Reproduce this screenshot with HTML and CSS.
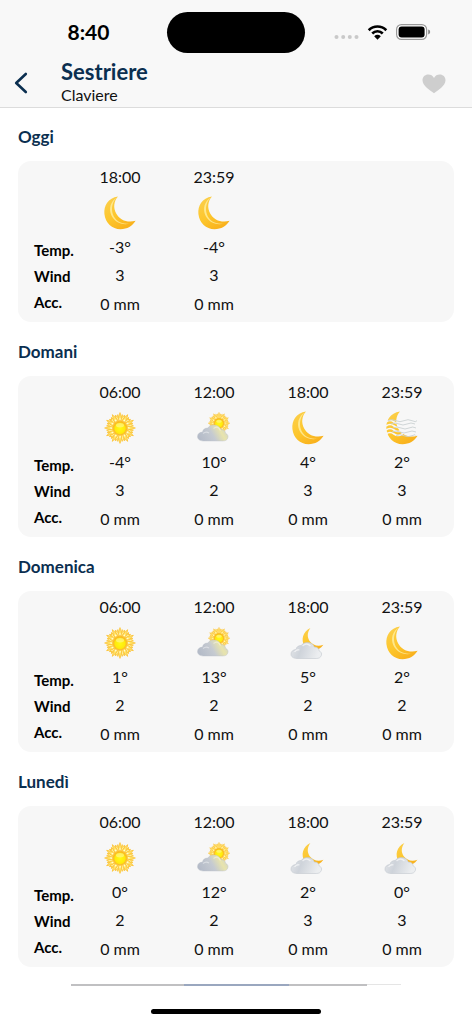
FILE: index.html
```html
<!DOCTYPE html>
<html lang="it">
<head>
<meta charset="utf-8">
<meta name="viewport" content="width=device-width, initial-scale=1">
<title>Sestriere - Claviere</title>
<link rel="stylesheet" href="styles.css">
</head>
<body>
<svg class="sprite" aria-hidden="true">
  <defs>
    <linearGradient id="moon-fill" x1="0" y1="0" x2="0.6" y2="1"><stop offset="0" stop-color="#fbd04f"/><stop offset="0.6" stop-color="#fdc62c"/><stop offset="1" stop-color="#f9b21d"/></linearGradient>
    <radialGradient id="sun-fill" cx="0.5" cy="0.55" r="0.55"><stop offset="0" stop-color="#fffb14"/><stop offset="0.7" stop-color="#ffe90d"/><stop offset="1" stop-color="#f7b718"/></radialGradient>
    <linearGradient id="day-cloud" x1="0" y1="0.6" x2="1" y2="0.3"><stop offset="0" stop-color="#b4bbc8"/><stop offset="0.45" stop-color="#c5cad1"/><stop offset="0.75" stop-color="#e8e4ac"/><stop offset="1" stop-color="#d1d4cb"/></linearGradient>
    <linearGradient id="night-cloud" x1="0" y1="0" x2="1" y2="0.2"><stop offset="0" stop-color="#e4e6e9"/><stop offset="0.4" stop-color="#ced3da"/><stop offset="1" stop-color="#eceef0"/></linearGradient>
    <g id="ray"><path d="M-3-7Q-4.6-10.5-2.2-13.4Q-1-10.5-1.5-8M3-7Q4.6-10.5 2.2-13.4Q1-10.5 1.5-8" fill="#fff0a0" stroke="#fbc437" stroke-width=".8"/><path d="M-1.9-6Q-2-11 0-15.4 2-11 1.9-6z" fill="#ffe268" stroke="#fcc02f" stroke-width=".7"/><circle cy="-8.8" r=".9" fill="#fffbd0"/></g>
    <g id="rays"><use href="#ray"/><use href="#ray" transform="rotate(30)"/><use href="#ray" transform="rotate(60)"/><use href="#ray" transform="rotate(90)"/><use href="#ray" transform="rotate(120)"/><use href="#ray" transform="rotate(150)"/><use href="#ray" transform="rotate(180)"/><use href="#ray" transform="rotate(210)"/><use href="#ray" transform="rotate(240)"/><use href="#ray" transform="rotate(270)"/><use href="#ray" transform="rotate(300)"/><use href="#ray" transform="rotate(330)"/></g>
    <g id="sun-shape"><circle r="10" fill="#fcb62c"/><use href="#rays"/><circle r="7.6" fill="#fbb62a" opacity=".75"/><circle r="6.3" fill="url(#sun-fill)"/><ellipse cy="-2.8" rx="4" ry="2.2" fill="#fff" opacity=".35"/></g>
    <path id="cloud-shape" d="M6 16C2.5 16 0 14.3 0 11.6 0 8.9 2.1 7.2 5 7.1 5.4 4.4 7.6 2.9 10.2 3.1 11.5 1 13.7 0 16.2 0 20 0 22.6 2 23.3 4.6 26 4.4 28 6 28.1 8.3 30.2 9.3 31 11 30.4 12.8 29.7 15 28 16 25.2 16z"/>
    <path id="moon-shape" d="M18 3.4C8 5 3.6 12.5 4.4 21 5.4 30 12 36 20.5 36.3 27.4 36.2 32.4 33 35.6 27.8 27.5 30.1 19.8 27.2 16.2 20.5 13 14.6 13.8 8.2 18 3.4z"/>
  </defs>
  <symbol id="sun" viewBox="0 0 40 40"><use href="#sun-shape" transform="translate(20 20)"/></symbol>
  <symbol id="moon" viewBox="0 0 40 40"><use href="#moon-shape" fill="url(#moon-fill)"/><path d="M17 4.6C10.5 8.3 8.7 15.5 11 21.5 14 29.2 22.4 32.7 30 30.5 22 31.8 15 28 12.8 21 11 15 12.4 8.5 17 4.6z" fill="#fff1a8" opacity=".75"/></symbol>
  <symbol id="sun-cloud" viewBox="0 0 40 40"><use href="#sun-shape" transform="translate(25 15.2) scale(.7)"/><use href="#cloud-shape" transform="translate(3.5 17)" fill="url(#day-cloud)" stroke="#bcc1c9" stroke-width=".4"/><path d="M19.5 20.5Q24 17 26.5 22.5M9 25.5Q12 23 15 25" fill="none" stroke="#fff" stroke-width="1.3" opacity=".4"/></symbol>
  <symbol id="moon-cloud" viewBox="0 0 40 40"><path d="M22.4 5C14.8 8.4 12.3 17 17 24 22 29.5 31 28.5 35.4 21.8 30 23.6 25 22.5 22 18.5 19 14.5 19 9.5 22.4 5z" fill="url(#moon-fill)"/><use href="#cloud-shape" transform="translate(3 19.5)" fill="url(#night-cloud)" stroke="#c3c7ce" stroke-width=".6"/><path d="M14.5 23Q18.5 19 22.5 23M6.5 29Q8.5 26 11.5 27" fill="none" stroke="#fff" stroke-width="1.3" opacity=".6"/></symbol>
  <symbol id="moon-fog" viewBox="0 0 40 40"><use href="#moon-shape" fill="url(#moon-fill)"/><g fill="none" stroke="#f7f7f7" stroke-width="1.6"><path d="M4 14q4-3 8 0t8 0 8 0 8 0M4 18q4-3 8 0t8 0 8 0 8 0M4 22q4-3 8 0t8 0 8 0 8 0M4 26q4-3 8 0t8 0 8 0 8 0"/></g><g fill="none" stroke="#cbd1d3" stroke-width=".9"><path d="M6 12.7q4-2 8 0t8 0 8 0 5 0M9 16q4-2 8 0t8 0 8 0M11 20q4-2 8 0t8 0 7 0M10 24q4-2 8 0t8 0 8 0M14 27.7q4-2 8 0t8 0 4 0"/></g></symbol>
</svg>

<header class="top">
  <div class="status">
    <div class="clock">8:40</div>
    <div class="island"></div>
    <div class="signals">
      <svg class="dots" viewBox="0 0 24 4" aria-hidden="true"><g fill="#c9c9c9"><circle cx="2" cy="2" r="2"/><circle cx="8.7" cy="2" r="2"/><circle cx="15.3" cy="2" r="2"/><circle cx="22" cy="2" r="2"/></g></svg>
      <svg class="wifi" viewBox="0 0 22 16" aria-hidden="true"><path d="M1.8 6.1C7 .9 15 .9 20.2 6.1M5.5 9.5C8.5 6.5 13.5 6.5 16.5 9.5" fill="none" stroke="#000" stroke-width="2.8"/><path d="M11 16l-3.5-3.6Q11 9.4 14.5 12.4z"/></svg>
      <svg class="battery" viewBox="0 0 35 16" aria-hidden="true"><rect x=".6" y=".6" width="30" height="14.8" rx="4.8" fill="#fff" stroke="#999" stroke-width="1.2"/><rect x="2.6" y="2.6" width="26" height="10.8" rx="3"/><path d="M32.2 5.6q2 .5 2 2.4t-2 2.4z" fill="#888"/></svg>
    </div>
  </div>
  <div class="bar">
    <button class="back" type="button" aria-label="Indietro"><svg viewBox="0 0 14 22"><path d="M11.8 2L2.2 11l9.6 9" fill="none" stroke="#0b2f50" stroke-width="2.6" stroke-linecap="round" stroke-linejoin="round"/></svg></button>
    <div class="place"><h1 class="title">Sestriere</h1><p class="subtitle">Claviere</p></div>
    <button class="favorite" type="button" aria-label="Preferito"><svg viewBox="0 0 24 20"><path d="M12 19.2C8 16.3.5 11.7.5 6.3.5 2.9 3 .6 6.2.6 8.8.6 10.8 1.7 12 4 13.2 1.7 15.2.6 17.8.6 21 .6 23.5 2.9 23.5 6.3 23.5 11.7 16 16.3 12 19.2z" fill="#cecece"/></svg></button>
  </div>
</header>

<main class="forecast">
  <section class="day">
    <h2 class="day-name">Oggi</h2>
    <div class="card"><table class="grid">
      <tr class="hours"><td class="label"></td><th>18:00</th><th>23:59</th><td></td><td></td></tr>
      <tr class="sky"><td></td><td><svg class="icon"><use href="#moon"/></svg></td><td><svg class="icon"><use href="#moon"/></svg></td><td></td><td></td></tr>
      <tr class="temp"><th class="label">Temp.</th><td>-3°</td><td>-4°</td><td></td><td></td></tr>
      <tr class="wind"><th class="label">Wind</th><td>3</td><td>3</td><td></td><td></td></tr>
      <tr class="acc"><th class="label">Acc.</th><td>0 mm</td><td>0 mm</td><td></td><td></td></tr>
    </table></div>
  </section>
  <section class="day">
    <h2 class="day-name">Domani</h2>
    <div class="card"><table class="grid">
      <tr class="hours"><td class="label"></td><th>06:00</th><th>12:00</th><th>18:00</th><th>23:59</th></tr>
      <tr class="sky"><td></td><td><svg class="icon"><use href="#sun"/></svg></td><td><svg class="icon"><use href="#sun-cloud"/></svg></td><td><svg class="icon"><use href="#moon"/></svg></td><td><svg class="icon"><use href="#moon-fog"/></svg></td></tr>
      <tr class="temp"><th class="label">Temp.</th><td>-4°</td><td>10°</td><td>4°</td><td>2°</td></tr>
      <tr class="wind"><th class="label">Wind</th><td>3</td><td>2</td><td>3</td><td>3</td></tr>
      <tr class="acc"><th class="label">Acc.</th><td>0 mm</td><td>0 mm</td><td>0 mm</td><td>0 mm</td></tr>
    </table></div>
  </section>
  <section class="day">
    <h2 class="day-name">Domenica</h2>
    <div class="card"><table class="grid">
      <tr class="hours"><td class="label"></td><th>06:00</th><th>12:00</th><th>18:00</th><th>23:59</th></tr>
      <tr class="sky"><td></td><td><svg class="icon"><use href="#sun"/></svg></td><td><svg class="icon"><use href="#sun-cloud"/></svg></td><td><svg class="icon"><use href="#moon-cloud"/></svg></td><td><svg class="icon"><use href="#moon"/></svg></td></tr>
      <tr class="temp"><th class="label">Temp.</th><td>1°</td><td>13°</td><td>5°</td><td>2°</td></tr>
      <tr class="wind"><th class="label">Wind</th><td>2</td><td>2</td><td>2</td><td>2</td></tr>
      <tr class="acc"><th class="label">Acc.</th><td>0 mm</td><td>0 mm</td><td>0 mm</td><td>0 mm</td></tr>
    </table></div>
  </section>
  <section class="day">
    <h2 class="day-name">Lunedì</h2>
    <div class="card"><table class="grid">
      <tr class="hours"><td class="label"></td><th>06:00</th><th>12:00</th><th>18:00</th><th>23:59</th></tr>
      <tr class="sky"><td></td><td><svg class="icon"><use href="#sun"/></svg></td><td><svg class="icon"><use href="#sun-cloud"/></svg></td><td><svg class="icon"><use href="#moon-cloud"/></svg></td><td><svg class="icon"><use href="#moon-cloud"/></svg></td></tr>
      <tr class="temp"><th class="label">Temp.</th><td>0°</td><td>12°</td><td>2°</td><td>0°</td></tr>
      <tr class="wind"><th class="label">Wind</th><td>2</td><td>2</td><td>3</td><td>3</td></tr>
      <tr class="acc"><th class="label">Acc.</th><td>0 mm</td><td>0 mm</td><td>0 mm</td><td>0 mm</td></tr>
    </table></div>
  </section>
</main>
<footer class="bottom">
  <div class="strip"><span class="strip-side"></span><span class="strip-active"></span><span class="strip-rest"></span><span class="strip-end"></span></div>
  <div class="home"></div>
</footer>
</body>
</html>
```
FILE: styles.css
```css
* { box-sizing: border-box; }
body { margin: 0; background: #fff; color: #111; font-family: Lato, "Liberation Sans", sans-serif; font-size: 16px; }
h1, h2, p { margin: 0; }
svg { display: block; }
button { padding: 0; border: 0; background: none; }
.sprite { position: absolute; width: 0; height: 0; }

.top { height: 108px; background: #f8f8f8; border-bottom: 1px solid #dcdcdc; }
.status { display: grid; grid-template-columns: 1fr 138px 1fr; align-items: center; padding-top: 12px; }
.clock { padding: 0 0 2px 10px; font-size: 21px; font-weight: 700; line-height: 24px; text-align: center; color: #000; }
.island { height: 41px; border-radius: 21px; background: #000; }
.signals { display: flex; align-items: center; justify-content: flex-end; gap: 8px; padding: 0 41px 2px 0; }
.dots { width: 25px; height: 4px; margin-top: 10px; }
.wifi { width: 21px; height: 16px; }
.battery { width: 35px; height: 16px; }
.bar { display: flex; align-items: center; padding: 5px 26px 0 14px; }
.back { width: 47px; padding-top: 4px; }
.back svg { width: 14px; height: 22px; }
.place { flex: 1; }
.title { font-size: 22px; font-weight: 700; line-height: 28px; color: #0b2f50; }
.subtitle { font-size: 16px; line-height: 18px; color: #111; }
.favorite { padding-top: 6px; }
.favorite svg { width: 24px; height: 20px; }

.forecast { display: flex; flex-direction: column; gap: 18px; padding: 17px 18px 0; }
.day-name { margin-bottom: 12px; font-size: 17px; font-weight: 700; line-height: 24px; color: #0b2f50; }
.card { padding: 0 5px 4px 0; border-radius: 13px; background: #f7f7f7; }
.grid { width: 100%; table-layout: fixed; border-collapse: collapse; }
.grid th, .grid td { padding: 0; font-size: 16px; font-weight: 400; line-height: 20px; text-align: center; vertical-align: middle; }
.grid .label { width: 55px; padding-left: 16px; font-size: 15px; font-weight: 700; text-align: left; white-space: nowrap; color: #000; }
.hours { height: 32px; }
.sky { height: 40px; }
.temp, .wind { height: 28px; }
.acc { height: 29px; }
.grid .temp .label { padding-top: 5px; }
.grid .wind .label { padding-top: 1px; }
.grid .acc .label { padding-bottom: 3px; }
.icon { width: 40px; height: 40px; margin: 0 auto; }

.bottom { display: flex; flex-direction: column; align-items: center; gap: 23px; padding-top: 17px; }
.strip { display: flex; width: 70%; height: 2px; }
.strip-side { flex: 112; background: #c0c0c2; }
.strip-active { flex: 105; background: #9aa7bf; }
.strip-rest { flex: 77; background: #c0c0c2; }
.strip-end { flex: 34; height: 1px; background: #e5e5e5; }
.home { width: 36%; height: 5px; border-radius: 3px; background: #000; }
```
